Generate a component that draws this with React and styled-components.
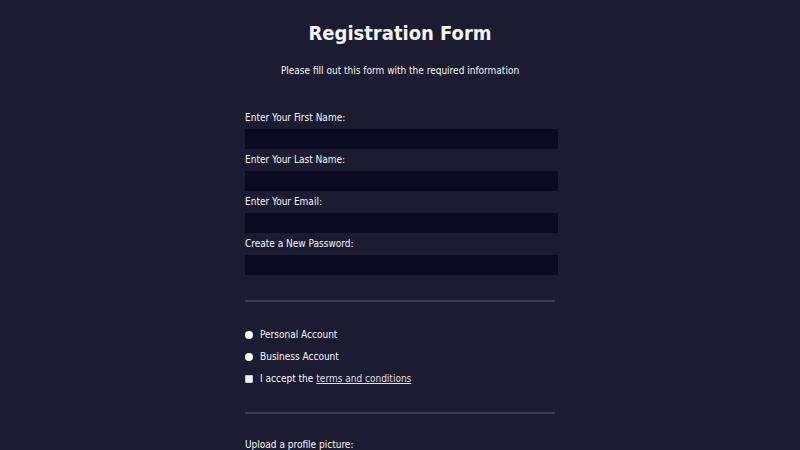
import React from "react";
import styled, { createGlobalStyle } from "styled-components";

const GlobalStyle = createGlobalStyle`
  html, body {
    margin: 0;
    padding: 0;
  }
  body {
    width: 100%;
    height: 100vh;
    background-color: #1b1b32;
    color: #f5f6f7;
    font-family: "DejaVu Sans Condensed", "DejaVu Sans", sans-serif;
    font-size: 10px;
    overflow: hidden;
  }
`;

const Title = styled.h1`
  margin: 21px auto 20px;
  font-size: 20px;
  line-height: 24px;
  text-align: center;
`;

const Intro = styled.p`
  margin: 10px 0;
  line-height: 12px;
  text-align: center;
`;

const Form = styled.form`
  width: 310px;
  margin: 0 auto;
  padding-bottom: 20px;
`;

const Fieldset = styled.fieldset`
  border: none;
  margin: 0;
  min-width: 0;
  padding: ${(p) => (p.$tight ? "19px 0 20px" : "20px 0")};
  border-bottom: ${(p) => (p.$last ? "none" : "2px solid #3b3b4f")};
`;

const Label = styled.label`
  display: block;
  margin: 5px 0;
  line-height: 11px;
`;

const Input = styled.input`
  display: block;
  box-sizing: border-box;
  margin: 6px 0 0 0;
  width: 313px;
  height: 20px;
  background-color: #0a0a23;
  border: 1px solid #0a0a23;
  color: #ffffff;
  font: inherit;
`;

const OptionRow = styled.label`
  display: flex;
  align-items: center;
  height: 17px;
  margin: 5px 0;
  line-height: 12px;
`;

const Radio = styled.input.attrs({ type: "radio" })`
  appearance: none;
  margin: 0 7px 0 0;
  width: 8px;
  height: 8px;
  border-radius: 50%;
  background: #ffffff;
  border: none;
`;

const Checkbox = styled.input.attrs({ type: "checkbox" })`
  appearance: none;
  box-sizing: border-box;
  margin: 0 7px 0 0;
  width: 8px;
  height: 8px;
  border-radius: 1px;
  background: #f4f4f4;
  border: 1px solid #c9c9cf;
`;

const Link = styled.a`
  color: #dfdfe2;
  margin-left: 3px;
`;

export default function App() {
  return (
    <>
      <GlobalStyle />
      <Title>Registration Form</Title>
      <Intro>Please fill out this form with the required information</Intro>
      <Form onSubmit={(e) => e.preventDefault()}>
        <Fieldset>
          <Label>
            Enter Your First Name: <Input type="text" />
          </Label>
          <Label>
            Enter Your Last Name: <Input type="text" />
          </Label>
          <Label>
            Enter Your Email: <Input type="email" />
          </Label>
          <Label>
            Create a New Password: <Input type="password" />
          </Label>
        </Fieldset>
        <Fieldset $tight>
          <OptionRow>
            <Radio name="account-type" /> Personal Account
          </OptionRow>
          <OptionRow>
            <Radio name="account-type" /> Business Account
          </OptionRow>
          <OptionRow>
            <Checkbox /> I accept the
            <Link href="#">terms and conditions</Link>
          </OptionRow>
        </Fieldset>
        <Fieldset $last>
          <Label>Upload a profile picture:</Label>
        </Fieldset>
      </Form>
    </>
  );
}
